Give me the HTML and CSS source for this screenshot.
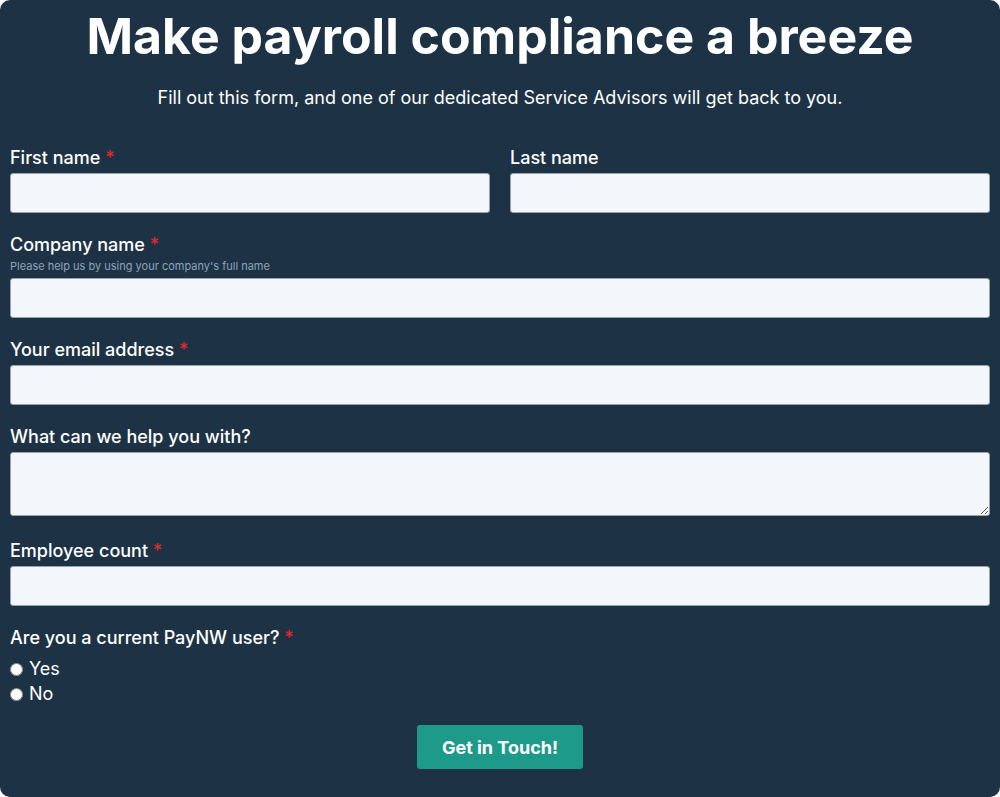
FILE: index.html
```html
<!DOCTYPE html>
<html lang="en">

<head>
    <meta charset="UTF-8">
    <meta name="viewport" content="width=device-width, initial-scale=1.0">
    <title>Contact a Service Advisor</title>
    <link rel="stylesheet" href="styles.css">
</head>

<body>
    <div class="card">
        <h1>Make payroll compliance a breeze</h1>
        <p class="intro">Fill out this form, and one of our dedicated Service Advisors will get back to you.</p>

        <form class="form">
            <div class="row">
                <div class="field">
                    <label for="first">First name <span class="req">*</span></label>
                    <input type="text" id="first">
                </div>
                <div class="field">
                    <label for="last">Last name</label>
                    <input type="text" id="last">
                </div>
            </div>

            <div class="field">
                <label for="company">Company name <span class="req">*</span></label>
                <p class="hint">Please help us by using your company's full name</p>
                <input type="text" id="company">
            </div>

            <div class="field">
                <label for="email">Your email address <span class="req">*</span></label>
                <input type="email" id="email">
            </div>

            <div class="field field-area">
                <label for="help">What can we help you with?</label>
                <textarea id="help"></textarea>
            </div>

            <div class="field">
                <label for="count">Employee count <span class="req">*</span></label>
                <input type="text" id="count">
            </div>

            <div class="field field-radios">
                <label>Are you a current PayNW user? <span class="req">*</span></label>
                <div class="radio"><input type="radio" name="user" id="yes"><span>Yes</span></div>
                <div class="radio"><input type="radio" name="user" id="no"><span>No</span></div>
            </div>

            <div class="actions">
                <button type="button" class="submit">Get in Touch!</button>
            </div>
        </form>
    </div>
</body>

</html>
```

FILE: styles.css
```css
body {
    margin: 0;
    padding: 0;
    background-color: #ffffff;
    font-family: Inter, "Liberation Sans", sans-serif;
}

.card {
    background-color: #1d3345;
    color: #ffffff;
    border-radius: 10px;
    padding: 6px 10px 28px;
    min-height: 797px;
    box-sizing: border-box;
}

h1 {
    margin: 0;
    font-size: 50px;
    line-height: 60px;
    font-weight: 700;
    text-align: center;
}

.intro {
    margin: 18px 0 0;
    font-size: 18px;
    line-height: 27px;
    text-align: center;
}

.form {
    margin-top: 35px;
}

.row {
    display: grid;
    grid-template-columns: 1fr 1fr;
    gap: 20px;
}

.field {
    margin-bottom: 20px;
}

.field-area {
    margin-bottom: 23px;
}

label {
    display: block;
    font-size: 18px;
    line-height: 24px;
    font-weight: 500;
    margin-bottom: 3px;
}

.req {
    color: #e3262a;
}

.hint {
    margin: -1px 0 5px;
    font-size: 11px;
    line-height: 14px;
    color: #8ea3b9;
}

input[type="text"],
input[type="email"],
textarea {
    display: block;
    width: 100%;
    box-sizing: border-box;
    height: 40px;
    background-color: #f3f6fa;
    border: 1px solid #9aa3ab;
    border-radius: 3px;
    font-family: inherit;
    font-size: 16px;
    padding: 6px 10px;
    margin: 0;
}

textarea {
    height: 64px;
    resize: vertical;
}

.radio {
    display: flex;
    align-items: center;
    font-size: 18px;
    line-height: 25px;
}

.radio input {
    width: 13px;
    height: 13px;
    margin: 1px 6px 0 0;
}

.field-radios {
    margin-bottom: 19px;
}

.field-radios label {
    margin-bottom: 6px;
}

.actions {
    text-align: center;
}

.submit {
    background-color: #1e9a8a;
    color: #ffffff;
    border: none;
    border-radius: 3px;
    font-family: inherit;
    font-size: 18px;
    font-weight: 700;
    width: 166px;
    height: 44px;
    cursor: pointer;
}

.submit:hover {
    background-color: #1a8778;
}
```
